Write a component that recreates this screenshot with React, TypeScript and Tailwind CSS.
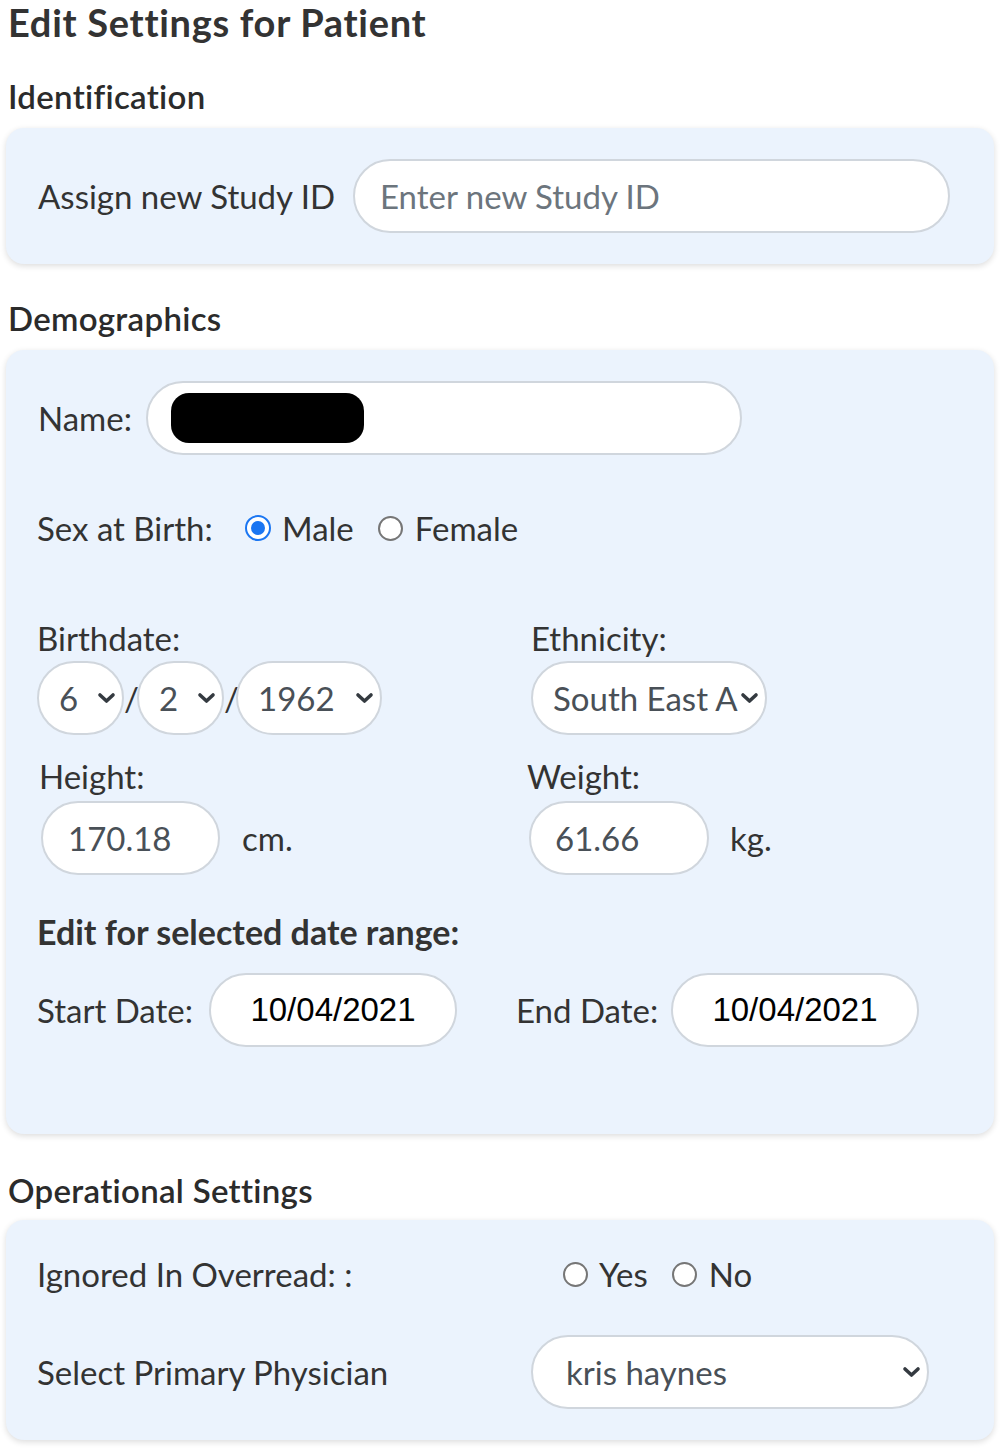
import React from "react";

const Chevron = () => (
  <svg width="19" height="12" viewBox="0 0 19 12" className="shrink-0 block">
    <path d="M3 3 L9.5 9 L16 3" fill="none" stroke="#343a40" strokeWidth="3.6" strokeLinecap="round" strokeLinejoin="round" />
  </svg>
);

const Radio = ({ checked }: { checked?: boolean }) =>
  checked ? (
    <span className="w-[26px] h-[26px] rounded-full border-[2.5px] border-[#1b76f2] bg-white flex items-center justify-center shrink-0">
      <span className="block w-[14px] h-[14px] rounded-full bg-[#1b76f2]" />
    </span>
  ) : (
    <span className="block w-[25px] h-[25px] rounded-full border-2 border-[#767676] bg-white shrink-0" />
  );

const Select = ({ value, w, pl = "pl-[20px]", pr = "pr-[6px]" }: { value: string; w: string; pl?: string; pr?: string }) => (
  <div className={`${w} h-[74px] rounded-full border-2 border-[#d0d6dd] bg-white flex items-center ${pr} ${pl} text-[#495057]`}>
    <span className="flex-1 whitespace-nowrap">{value}</span>
    <Chevron />
  </div>
);

export default function App() {
  return (
    <div className="w-[1008px] min-h-[1452px] bg-white font-['Lato',sans-serif] text-[#333] text-[33px] leading-[40px]">
      <h1 className="pl-[8px] text-[38px] leading-[44px] tracking-[0.7px] font-bold text-[#333]">Edit Settings for Patient</h1>

      <h2 className="pl-[8px] mt-[34px] text-[33px] leading-[36px] tracking-[0.3px] font-semibold text-[#2b2b2b]">Identification</h2>
      <div className="mx-[6px] mt-[14px] w-[988px] rounded-[18px] bg-[#ebf3fd] shadow-[0_2px_6px_rgba(0,0,0,0.14)] pl-[32px] py-[31px] flex items-center">
        <span className="w-[315px] whitespace-nowrap">Assign new Study ID</span>
        <div className="w-[597px] h-[74px] rounded-full border-2 border-[#d0d6dd] bg-white flex items-center pl-[25px] text-[#6c757d]">
          Enter new Study ID
        </div>
      </div>

      <h2 className="pl-[8px] mt-[36px] text-[33px] leading-[36px] tracking-[0.3px] font-semibold text-[#2b2b2b]">Demographics</h2>
      <div className="mx-[6px] mt-[14px] w-[988px] rounded-[18px] bg-[#ebf3fd] shadow-[0_2px_6px_rgba(0,0,0,0.14)] pl-[31px] pt-[31px] pb-[87px]">
        <div className="flex items-center h-[74px]">
          <span className="w-[109px] pl-[1px]">Name:</span>
          <div className="w-[596px] h-[74px] rounded-full border-2 border-[#d0d6dd] bg-white flex items-center pl-[23px]">
            <span className="block w-[193px] h-[50px] rounded-[18px] bg-black" />
          </div>
        </div>

        <div className="flex items-center h-[40px] mt-[53px]">
          <span className="w-[208px] whitespace-nowrap">Sex at Birth:</span>
          <Radio checked />
          <span className="ml-[11px]">Male</span>
          <span className="ml-[24px] flex items-center"><Radio /></span>
          <span className="ml-[12px]">Female</span>
        </div>

        <div className="flex mt-[70px]">
          <span className="w-[494px]">Birthdate:</span>
          <span>Ethnicity:</span>
        </div>
        <div className="flex items-center mt-[3px]">
          <div className="w-[494px] flex items-center">
            <Select value="6" w="w-[87px]" />
            <span className="w-[13px] text-center">/</span>
            <Select value="2" w="w-[87px]" />
            <span className="w-[12px] text-center">/</span>
            <Select value="1962" w="w-[146px]" />
          </div>
          <Select value="South East A" w="w-[236px]" pl="pl-[20px]" pr="pr-[6px]" />
        </div>

        <div className="flex mt-[21px]">
          <span className="w-[490px] pl-[2px]">Height:</span>
          <span>Weight:</span>
        </div>
        <div className="flex items-center mt-[5px]">
          <div className="w-[492px] pl-[4px] flex items-center">
            <div className="w-[179px] h-[74px] rounded-full border-2 border-[#d0d6dd] bg-white flex items-center pl-[25px] text-[#495057]">170.18</div>
            <span className="ml-[22px]">cm.</span>
          </div>
          <div className="w-[180px] h-[74px] rounded-full border-2 border-[#d0d6dd] bg-white flex items-center pl-[24px] text-[#495057]">61.66</div>
          <span className="ml-[21px]">kg.</span>
        </div>

        <div className="mt-[37px] font-bold text-[34px]">Edit for selected date range:</div>
        <div className="flex items-center mt-[21px]">
          <span className="w-[172px] whitespace-nowrap">Start Date:</span>
          <div className="w-[248px] h-[74px] rounded-full border-2 border-[#d0d6dd] bg-white flex items-center justify-center font-['Liberation_Sans',sans-serif] text-[33px] text-black">10/04/2021</div>
          <span className="ml-[59px] w-[155px] whitespace-nowrap">End Date:</span>
          <div className="w-[248px] h-[74px] rounded-full border-2 border-[#d0d6dd] bg-white flex items-center justify-center font-['Liberation_Sans',sans-serif] text-[33px] text-black">10/04/2021</div>
        </div>
      </div>

      <h2 className="pl-[8px] mt-[38px] text-[33px] leading-[36px] tracking-[0.3px] font-semibold text-[#2b2b2b]">Operational Settings</h2>
      <div className="mx-[6px] mt-[12px] w-[988px] rounded-[18px] bg-[#ebf3fd] shadow-[0_2px_6px_rgba(0,0,0,0.14)] pl-[31px] pt-[34px] pb-[31px]">
        <div className="flex items-center h-[40px]">
          <span className="w-[526px] whitespace-nowrap">Ignored In Overread: :</span>
          <Radio />
          <span className="ml-[11px]">Yes</span>
          <span className="ml-[24px] flex items-center"><Radio /></span>
          <span className="ml-[12px]">No</span>
        </div>
        <div className="flex items-center mt-[41px]">
          <span className="w-[494px] whitespace-nowrap">Select Primary Physician</span>
          <Select value="kris haynes" w="w-[398px]" pl="pl-[33px]" />
        </div>
      </div>
    </div>
  );
}
